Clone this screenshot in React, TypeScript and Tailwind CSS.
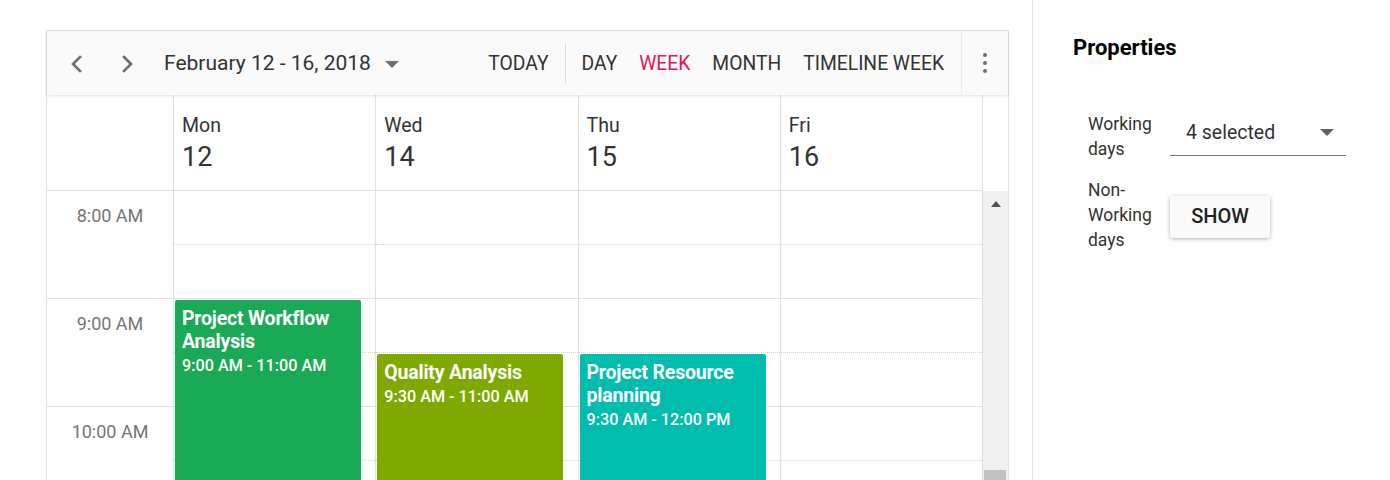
import React from "react";

// ─── Data ─────────────────────────────────────────────────────────────────────

const DAYS = [
  { name: "Mon", date: "12" },
  { name: "Wed", date: "14" },
  { name: "Thu", date: "15" },
  { name: "Fri", date: "16" },
];

const HOURS = ["8:00 AM", "9:00 AM", "10:00 AM", ""];

type Ev = { day: number; title: string[]; time: string; start: number; end: number; color: string };

// start / end in half-hour slots from 8:00 AM
const EVENTS: Ev[] = [
  { day: 0, title: ["Project Workflow", "Analysis"], time: "9:00 AM - 11:00 AM", start: 2, end: 6, color: "bg-[#1aaa55]" },
  { day: 1, title: ["Quality Analysis"], time: "9:30 AM - 11:00 AM", start: 3, end: 6, color: "bg-[#7fa900]" },
  { day: 2, title: ["Project Resource", "planning"], time: "9:30 AM - 12:00 PM", start: 3, end: 8, color: "bg-[#00bdae]" },
];

const SLOT = 54;

// ─── Icons ────────────────────────────────────────────────────────────────────

function Chevron({ dir }: { dir: "left" | "right" }) {
  return (
    <svg width="16" height="18" viewBox="0 0 16 18" fill="none">
      <polyline
        points={dir === "left" ? "11,2 4,9 11,16" : "5,2 12,9 5,16"}
        stroke="#6e6e6e"
        strokeWidth="2.6"
        strokeLinecap="square"
      />
    </svg>
  );
}

function Caret({ color = "#616161" }: { color?: string }) {
  return (
    <svg width="14" height="7" viewBox="0 0 14 7">
      <polygon points="0,0 14,0 7,7" fill={color} />
    </svg>
  );
}

// ─── Toolbar ──────────────────────────────────────────────────────────────────

function Toolbar() {
  const views = ["DAY", "WEEK", "MONTH", "TIMELINE WEEK"];
  return (
    <div className="relative z-10 flex h-[64px] items-center bg-[#fafafa] shadow-[0_1px_3px_rgba(0,0,0,0.12)]">
      <div className="flex items-center pl-[5px] pt-[2px]">
        <button className="flex h-[50px] w-[50px] items-center justify-center">
          <Chevron dir="left" />
        </button>
        <button className="flex h-[50px] w-[50px] items-center justify-center">
          <Chevron dir="right" />
        </button>
        <button className="ml-[12px] flex items-center gap-[14px] text-[21px] text-[#333]">
          <span>February 12 - 16, 2018</span>
          <Caret color="#6e6e6e" />
        </button>
      </div>

      <div className="ml-auto flex h-full items-center text-[19.3px] text-[#333]">
        <span className="px-[11px] pt-[3px]">TODAY</span>
        <span className="mx-[5px] h-[40px] w-px bg-[#dcdcdc]" />
        {views.map((v) => (
          <span key={v} className={`px-[11px] pt-[3px] ${v === "WEEK" ? "text-[#e3165b]" : ""}`}>
            {v}
          </span>
        ))}
        <div className="ml-[6px] flex h-full w-[47px] flex-col items-center justify-center gap-[4px] border-l border-[#ececec]">
          <span className="h-[4px] w-[4px] rounded-full bg-[#6e6e6e]" />
          <span className="h-[4px] w-[4px] rounded-full bg-[#6e6e6e]" />
          <span className="h-[4px] w-[4px] rounded-full bg-[#6e6e6e]" />
        </div>
      </div>
    </div>
  );
}

// ─── Grid ─────────────────────────────────────────────────────────────────────

function Header() {
  return (
    <div className="flex h-[96px]">
      <div className="w-[127px] shrink-0 border-r border-b border-[#e0e0e0]" />
      {DAYS.map((d) => (
        <div key={d.name} className="flex-1 border-r border-b border-[#e0e0e0] pl-[8px] pt-[19px] text-[#333]">
          <div className="text-[19.5px] leading-[24px]">{d.name}</div>
          <div className="mt-[3px] text-[27px] leading-[32px]">{d.date}</div>
        </div>
      ))}
      <div className="w-[25px] shrink-0" />
    </div>
  );
}

function Body() {
  return (
    <div className="flex">
      <div className="w-[127px] shrink-0 border-r border-[#e0e0e0]">
        {HOURS.map((h, i) => (
          <div key={i} className="h-[108px] border-b border-[#e0e0e0] pt-[12px] text-center text-[18px] leading-[26px] text-[#757575]">
            {h}
          </div>
        ))}
      </div>

      {DAYS.map((d, i) => (
        <div key={d.name} className="relative flex-1 border-r border-[#e0e0e0]">
          {HOURS.map((_, k) => (
            <div key={k}>
              <div className="h-[54px] border-b border-dotted border-[#d6d6d6]" />
              <div className="h-[54px] border-b border-[#e0e0e0]" />
            </div>
          ))}
          {EVENTS.filter((e) => e.day === i).map((e) => (
            <div
              key={e.time}
              className={`absolute left-[1px] w-[186px] rounded-[2px] px-[7px] pt-[7px] text-white ${e.color}`}
              style={{ top: e.start * SLOT + 1, height: (e.end - e.start) * SLOT - 2 }}
            >
              {e.title.map((t) => (
                <div key={t} className="text-[19.5px] font-bold leading-[23px] tracking-[-0.2px]">
                  {t}
                </div>
              ))}
              <div className="pt-[1px] text-[16.2px] font-medium leading-[23px]">{e.time}</div>
            </div>
          ))}
        </div>
      ))}

      <div className="relative w-[25px] shrink-0 bg-[#f1f1f1]">
        <div className="flex justify-center pt-[10px]">
          <svg width="10" height="6" viewBox="0 0 10 6">
            <polygon points="0,6 10,6 5,0" fill="#505050" />
          </svg>
        </div>
        <div className="absolute left-[1px] right-[2px] top-[279px] h-[40px] bg-[#c1c1c1]" />
      </div>
    </div>
  );
}

// ─── Properties ───────────────────────────────────────────────────────────────

function Properties() {
  return (
    <div className="flex-1 pl-[40px] pt-[34px]">
      <div className="text-[22px] font-bold leading-[28px] text-black">Properties</div>

      <div className="ml-[15px] mt-[50px] text-[17.5px] leading-[25px] text-[#333]">
        <div className="flex items-start">
          <div className="w-[82px] shrink-0">Working days</div>
          <div className="mt-[-2px] flex h-[46px] w-[176px] items-center justify-between border-b border-[#757575] pl-[16px] pr-[12px]">
            <span className="text-[19.5px] text-[#333]">4 selected</span>
            <Caret />
          </div>
        </div>

        <div className="mt-[16px] flex items-center">
          <div className="w-[82px] shrink-0">Non-Working days</div>
          <button className="mt-[2px] h-[42px] w-[100px] rounded-[2px] bg-[#fafafa] text-[20px] font-medium text-[#222] shadow-[0_1px_4px_rgba(0,0,0,0.3)]">
            SHOW
          </button>
        </div>
      </div>
    </div>
  );
}

// ─── App ──────────────────────────────────────────────────────────────────────

export default function App() {
  return (
    <div className="flex h-[480px] w-[1390px] overflow-hidden bg-white font-['Roboto',sans-serif]">
      <div className="w-[1033px] shrink-0 border-r border-[#e0e0e0] pl-[46px] pt-[30px]">
        <div className="w-[963px] border border-[#e0e0e0]">
          <Toolbar />
          <Header />
          <Body />
        </div>
      </div>
      <Properties />
    </div>
  );
}
